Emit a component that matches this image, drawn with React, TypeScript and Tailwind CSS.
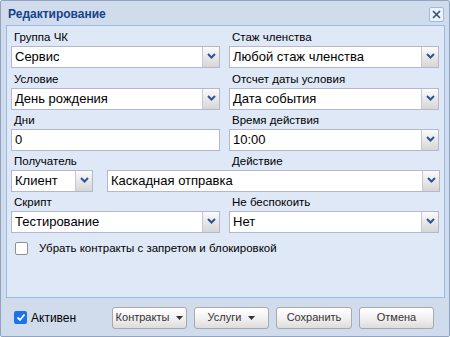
import React from "react";

const font = { fontFamily: '"Liberation Sans", Arial, sans-serif' };

function Arrow() {
  return (
    <svg width="9" height="6" viewBox="0 0 9 6">
      <path d="M1 1 L4.5 4.5 L8 1" stroke="#2d5596" strokeWidth="2" fill="none" />
    </svg>
  );
}

function Select({ value, className }: { value: string; className: string }) {
  return (
    <div className={"flex h-[22px] bg-white border border-[#b5b8c8] " + className}>
      <div className="flex-1 pl-[3px] text-[13px] leading-[20px] text-black whitespace-nowrap overflow-hidden">{value}</div>
      <div className="w-[17px] border-l border-[#c5c8d4] bg-gradient-to-b from-[#fbfbfb] to-[#d6d6d6] flex items-center justify-center pb-[2px]">
        <Arrow />
      </div>
    </div>
  );
}

function Input({ value, className }: { value: string; className: string }) {
  return (
    <div className={"h-[22px] bg-white border border-[#b5b8c8] pl-[3px] text-[13px] leading-[20px] text-black " + className}>
      {value}
    </div>
  );
}

function Label({ text, h }: { text: string; h: string }) {
  return (
    <div className={"flex items-end pl-[3px] pb-[2px] text-[11.5px] leading-[14px] text-black " + h}>{text}</div>
  );
}

function Btn({ text, w, drop }: { text: string; w: string; drop?: boolean }) {
  return (
    <div
      className={
        "h-[22px] rounded-[3px] border border-[#a6a9ae] bg-gradient-to-b from-[#ffffff] via-[#f2f2f2] to-[#dcdcdc] flex items-center justify-center gap-[7px] text-[11px] text-[#333] " +
        w
      }
    >
      <span>{text}</span>
      {drop && (
        <svg width="7" height="4" viewBox="0 0 7 4">
          <path d="M0 0 L7 0 L3.5 4 Z" fill="#333" />
        </svg>
      )}
    </div>
  );
}

export default function App() {
  return (
    <div style={font} className="w-[450px] h-[337px] bg-[#d0dcec] border border-[#8fa4c2] rounded-[2px] flex flex-col">
      <div className="h-[24px] flex items-center justify-between pl-[7px] pr-[5px]">
        <span className="text-[12px] font-bold text-[#15428b] mt-[1px]">Редактирование</span>
        <div className="w-[15px] h-[15px] border border-[#99bbe8] rounded-[2px] bg-[#eef3fa] flex items-center justify-center mt-[3px]">
          <svg width="9" height="9" viewBox="0 0 9 9">
            <path d="M1 1 L8 8 M8 1 L1 8" stroke="#2f4f8a" strokeWidth="1.6" />
          </svg>
        </div>
      </div>
      <div className="ml-[5px] mr-[4px] h-[273px] bg-[#dfe8f6] border border-[#99bbe8] pl-[4px] pr-[4px]">
        <div className="grid grid-cols-[209px_210px] gap-x-[9px]">
          <div>
            <Label text="Группа ЧК" h="h-[20px]" />
            <Select value="Сервис" className="" />
          </div>
          <div>
            <Label text="Стаж членства" h="h-[20px]" />
            <Select value="Любой стаж членства" className="" />
          </div>
          <div>
            <Label text="Условие" h="h-[20px]" />
            <Select value="День рождения" className="" />
          </div>
          <div>
            <Label text="Отсчет даты условия" h="h-[20px]" />
            <Select value="Дата события" className="" />
          </div>
          <div>
            <Label text="Дни" h="h-[19px]" />
            <Input value="0" className="" />
          </div>
          <div>
            <Label text="Время действия" h="h-[19px]" />
            <Select value="10:00" className="" />
          </div>
          <div>
            <Label text="Получатель" h="h-[19px]" />
          </div>
          <div>
            <Label text="Действие" h="h-[19px]" />
          </div>
        </div>
        <div className="flex">
          <Select value="Клиент" className="w-[82px]" />
          <Select value="Каскадная отправка" className="ml-[14px] flex-1" />
        </div>
        <div className="grid grid-cols-[209px_210px] gap-x-[9px]">
          <div>
            <Label text="Скрипт" h="h-[19px]" />
            <Select value="Тестирование" className="" />
          </div>
          <div>
            <Label text="Не беспокоить" h="h-[19px]" />
            <Select value="Нет" className="" />
          </div>
        </div>
        <div className="flex items-center mt-[7px] pl-[4px]">
          <div className="w-[13px] h-[13px] border border-[#8f8f8f] rounded-[2px] bg-white" />
          <span className="ml-[11px] text-[11.5px] text-black">Убрать контракты с запретом и блокировкой</span>
        </div>
      </div>
      <div className="flex-1 flex items-center pl-[13px] pr-[15px]">
        <div className="flex items-center">
          <div className="w-[13px] h-[13px] rounded-[2px] bg-[#1a73e8] flex items-center justify-center">
            <svg width="10" height="9" viewBox="0 0 10 9">
              <path d="M1.5 4.5 L4 7 L8.5 1.5" stroke="white" strokeWidth="1.8" fill="none" />
            </svg>
          </div>
          <span className="ml-[4px] text-[12px] text-black mt-[2px]">Активен</span>
        </div>
        <div className="ml-auto flex gap-[7px] mt-[1px]">
          <Btn text="Контракты" w="w-[75px]" drop />
          <Btn text="Услуги" w="w-[75px]" drop />
          <Btn text="Сохранить" w="w-[76px]" />
          <Btn text="Отмена" w="w-[75px]" />
        </div>
      </div>
    </div>
  );
}
